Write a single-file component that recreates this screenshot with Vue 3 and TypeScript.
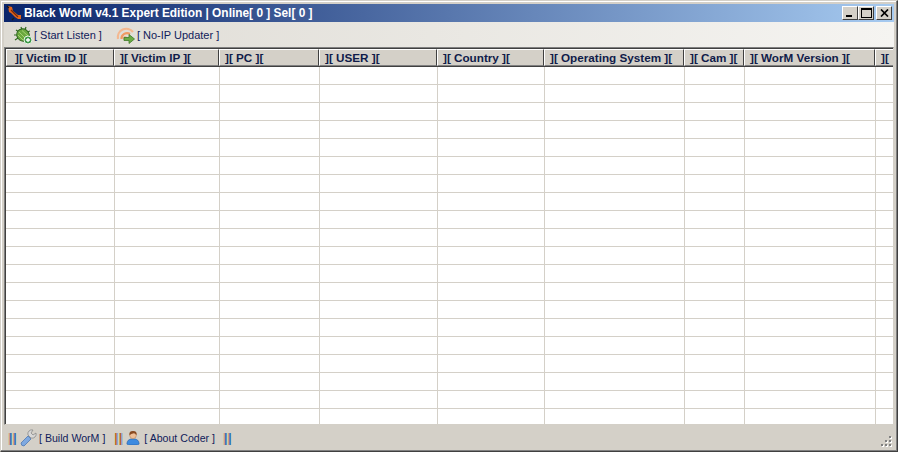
<template>
  <div class="window">
    <div class="titlebar">
      <svg class="app-icon" width="16" height="16" viewBox="0 0 16 16">
        <path d="M2 1 L6 2 L7 6 L12 10 L15 10 L15 14 L12 14 L9 12 L5 8 L3 7 Z" fill="#e2661c" />
        <path d="M5 5 L12 12" stroke="#7a2a08" stroke-width="1.3" fill="none" />
        <path d="M1 1 L3 3 M8 13 L6 15" stroke="#1a1a1a" stroke-width="1.2" fill="none" />
      </svg>
      <span class="title-text">Black WorM v4.1 Expert Edition | Online[ 0 ] Sel[ 0 ]</span>
      <div class="caption-buttons">
        <button class="cap"><span class="min"></span></button>
        <button class="cap"><span class="max"></span></button>
        <button class="cap close">
          <svg width="9" height="8" viewBox="0 0 9 8"><path d="M1 0.5 L8 7.5 M8 0.5 L1 7.5" stroke="#000" stroke-width="1.7" /></svg>
        </button>
      </div>
    </div>

    <div class="toolbar">
      <div class="tool first">
        <svg width="20" height="20" viewBox="0 0 20 20">
          <path d="M3 5 L6 7 M8 2 L9 5 M13 2 L12 5 M17 6 L14 7 M1 10 L4 10 M2 15 L5 13" stroke="#2f6b1e" stroke-width="1.2" />
          <ellipse cx="10" cy="10" rx="6.5" ry="6" fill="#6aa83e" stroke="#2f6420" transform="rotate(35 10 10)" />
          <path d="M6 7 L13 14 M9 5.5 L15 11 M5 10 L10 15" stroke="#a5d272" stroke-width="1" />
          <circle cx="15" cy="15" r="4" fill="#3f9a4a" stroke="#e8f3e4" />
          <path d="M13 15 H17 M15 13 V17" stroke="#fff" stroke-width="1.3" />
        </svg>
        <span>[ Start Listen ]</span>
      </div>
      <div class="tool second">
        <svg width="20" height="20" viewBox="0 0 20 20">
          <path d="M2 14 A8.500 8.500 0 0 1 17 7" stroke="#f4b890" stroke-width="2.200" fill="none" />
          <path d="M5.500 14 A5.500 5.500 0 0 1 14 9" stroke="#f09a62" stroke-width="2.200" fill="none" />
          <circle cx="9" cy="13" r="2" fill="#eeb08a" />
          <path d="M8 12.500 H13 V9.500 L18.500 14 L13 18.500 V15.500 H8 Z" fill="#6bab45" stroke="#3e7a26" stroke-width="0.8" />
        </svg>
        <span>[ No-IP Updater ]</span>
      </div>
    </div>

    <div class="table">
      <div class="table-inner">
        <div class="thead">
          <div v-for="c in columns" :key="c.label" class="th" :style="{ width: c.width + 'px' }">{{ c.label }}</div>
        </div>
        <div v-for="r in rowCount" :key="r" class="tr">
          <div v-for="(c, i) in columns" :key="c.label" class="td" :style="{ width: (i === 0 ? c.width + 1 : c.width) + 'px' }"></div>
        </div>
      </div>
    </div>

    <div class="statusbar">
      <span class="sep blue">||</span>
      <svg class="wrench" width="17" height="18" viewBox="0 0 17 18">
        <path d="M1 14 L8 7 L11 10 L4 17 Q1 17 1 14 Z" fill="#7fa9e0" stroke="#4f78b4" stroke-width="0.8" />
        <path d="M8 6 A4 4 0 0 1 13 1 L11 4 L13 6 L16 4 A4 4 0 0 1 11 9 Z" fill="#d8d8d8" stroke="#8a8a8a" stroke-width="0.8" />
      </svg>
      <span class="label build">[ Build WorM ]</span>
      <span class="sep orange">||</span>
      <svg class="person" width="14" height="15" viewBox="0 0 16 17">
        <path d="M1 16 Q1 10 8 10 Q15 10 15 16 L13 17 H3 Z" fill="#3d8be0" stroke="#2a62a8" stroke-width="0.7" />
        <circle cx="8" cy="6" r="3.800" fill="#eebf98" stroke="#b07a50" stroke-width="0.6" />
        <path d="M4 6 Q3 1 8 1 Q13 1 12 6 Q10 3 8 4 Q6 4 4 6 Z" fill="#8a4a20" />
      </svg>
      <span class="label about">[ About Coder ]</span>
      <span class="sep blue last">||</span>
      <div class="grip">
        <i v-for="d in gripDots" :key="d" :class="'dot d' + d"></i>
      </div>
    </div>
  </div>
</template>

<script setup lang="ts">
type Column = { label: string; width: number }

const columns: Column[] = [
  { label: '][ Victim ID ][', width: 108 },
  { label: '][ Victim IP ][', width: 105 },
  { label: '][ PC ][', width: 100 },
  { label: '][ USER ][', width: 118 },
  { label: '][ Country ][', width: 107 },
  { label: '][ Operating System ][', width: 140 },
  { label: '][ Cam ][', width: 60 },
  { label: '][ WorM Version ][', width: 131 },
  { label: '][', width: 30 }
]

const rowCount = 20
const gripDots = [1, 2, 3, 4, 5, 6]
</script>

<style>
html, body { margin: 0; background: #d4d0c8; overflow: hidden; }
</style>

<style scoped>
.window {
  box-sizing: border-box;
  width: 898px;
  height: 452px;
  background: #d4d0c8;
  border: 1px solid #d4d0c8;
  border-right-color: #404040;
  border-bottom-color: #404040;
  padding: 3px 3px 2px;
  display: flex;
  flex-direction: column;
  box-shadow: inset -1px -1px 0 #808080, inset 1px 1px 0 #fff;
}
.titlebar {
  height: 18px;
  flex: none;
  display: flex;
  align-items: center;
  background: linear-gradient(90deg, #0a246a, #a6caf0);
  color: #fff;
  padding: 0 2px 0 2px;
}
.app-icon { flex: none; margin-right: 2px; }
.title-text {
  font: bold 11.9px "Liberation Sans", sans-serif;
  white-space: pre;
}
.caption-buttons { margin-left: auto; display: flex; }
.cap {
  width: 16px;
  height: 14px;
  padding: 0;
  background: #d4d0c8;
  border: 1px solid;
  border-color: #fff #404040 #404040 #fff;
  display: flex;
  align-items: center;
  justify-content: center;
  position: relative;
}
.cap.close { margin-left: 2px; }
.min { position: absolute; left: 3px; bottom: 2px; width: 6px; height: 2px; background: #000; }
.max { width: 9px; height: 7px; border: 1px solid #000; border-top-width: 2px; margin-top: -1px; }
.toolbar {
  height: 25px;
  flex: none;
  display: flex;
  align-items: center;
  background: linear-gradient(90deg, #dedbd4, #f5f4f1);
  font: 11px "Liberation Sans", sans-serif;
  color: #10205a;
}
.tool { display: flex; align-items: center; gap: 1px; }
.tool.first { margin-left: 9px; }
.tool.second { margin-left: 14px; }
.table {
  flex: none;
  height: 378px;
  box-sizing: border-box;
  border: 1px solid;
  border-color: #808080 #d4d0c8 #d4d0c8 #808080;
  background: #fff;
  overflow: hidden;
}
.table-inner {
  height: 100%;
  box-sizing: border-box;
  border-top: 1px solid #404040;
  border-left: 1px solid #404040;
  overflow: hidden;
}
.thead { display: flex; height: 18px; box-sizing: border-box; border-bottom: 1px solid #404040; }
.th {
  box-sizing: border-box;
  flex: none;
  height: 17px;
  background: #d4d0c8;
  border: 1px solid;
  border-color: #fff #404040 #808080 #fff;
  padding: 1px 0 0 5px;
  font: bold 11.7px/14px "Liberation Sans", sans-serif;
  color: #101c4a;
  white-space: pre;
  overflow: hidden;
}
.th:first-child { padding-left: 8px; }
.tr { display: flex; height: 18px; box-sizing: border-box; border-bottom: 1px solid #d4d0c8; }
.td { box-sizing: border-box; flex: none; border-right: 1px solid #d4d0c8; }
.statusbar {
  flex: 1;
  position: relative;
  display: flex;
  align-items: center;
  font: 10.6px "Liberation Sans", sans-serif;
  color: #10205a;
  padding: 1px 0 0 5px;
}
.sep { font-weight: bold; font-size: 12px; letter-spacing: 1px; width: 7px; flex: none; }
.sep.blue { color: #2b6cb5; text-shadow: -1px 0 #d9a066; }
.sep.orange { color: #b5661a; text-shadow: 1px 0 #7aa6d8; margin-left: 9px; }
.sep.last { margin-left: 9px; }
.wrench { margin-left: 4px; flex: none; }
.person { margin-left: 5px; flex: none; }
.build { margin-left: 2px; }
.about { margin-left: 4px; }
.grip { position: absolute; right: 0; bottom: 0; width: 14px; height: 14px; }
.dot { position: absolute; width: 2px; height: 2px; background: #808080; box-shadow: 1px 1px 0 #fff; }
.d1 { right: 3px; bottom: 3px; }
.d2 { right: 7px; bottom: 3px; }
.d3 { right: 11px; bottom: 3px; }
.d4 { right: 3px; bottom: 7px; }
.d5 { right: 7px; bottom: 7px; }
.d6 { right: 3px; bottom: 11px; }
</style>
